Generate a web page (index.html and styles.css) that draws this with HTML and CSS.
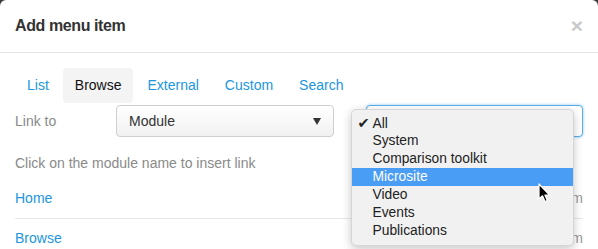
FILE: index.html
```html
<!DOCTYPE html>
<html lang="en">

<head>
  <meta charset="UTF-8">
  <meta name="viewport" content="width=device-width, initial-scale=1.0">
  <title>Add menu item</title>

  <link rel="stylesheet" href="styles.css">
</head>

<body>
  <div class="modal">
    <!-- Dialog header with title and close button -->
    <div class="modal-header">
      <h4 class="modal-title">Add menu item</h4>
      <span class="close">&times;</span>
    </div>

    <div class="modal-body">
      <ul class="tabs">
        <li><a href="#">List</a></li>
        <li class="active"><a href="#">Browse</a></li>
        <li><a href="#">External</a></li>
        <li><a href="#">Custom</a></li>
        <li><a href="#">Search</a></li>
      </ul>

      <div class="form-row">
        <label class="form-label">Link to</label>
        <div class="select">
          <span>Module</span>
          <span class="caret"></span>
        </div>
        <div class="select focus">
          <span></span>
          <span class="caret"></span>

          <!-- Open options list of the category select -->
          <ul class="dropdown">
            <li class="checked">All</li>
            <li>System</li>
            <li>Comparison toolkit</li>
            <li class="hover">Microsite</li>
            <li>Video</li>
            <li>Events</li>
            <li>Publications</li>
          </ul>
        </div>
      </div>

      <p class="help">Click on the module name to insert link</p>

      <ul class="modules">
        <li><a href="#">Home</a><span class="type">System</span></li>
        <li><a href="#">Browse</a><span class="type">System</span></li>
      </ul>
    </div>

    <svg class="cursor" width="13" height="20" viewBox="0 0 13 20">
      <path d="M1 1 L1 16 L4.5 12.8 L7 18.5 L9.3 17.5 L6.9 12 L11.5 12 Z" fill="#000" stroke="#fff" stroke-width="1.2" stroke-linejoin="round" />
    </svg>
  </div>
</body>

</html>
```

FILE: styles.css
```css
/* Page and dialog frame */
body {
  margin: 0;
  background-color: #3a3a3a;
  font-family: "Liberation Sans", Arial, Helvetica, sans-serif;
  font-size: 14px;
  color: #333;
}

.modal {
  position: relative;
  width: 598px;
  height: 249px;
  overflow: hidden;
  background-color: #fff;
  border-radius: 6px 6px 0 0;
}

.modal-header {
  display: flex;
  justify-content: space-between;
  align-items: center;
  padding: 15px;
  border-bottom: 1px solid #e5e5e5;
}

.modal-title {
  margin: 0;
  font-size: 16px;
  line-height: 22px;
  font-weight: bold;
  letter-spacing: -0.4px;
  color: #333;
}

.close {
  font-size: 21px;
  line-height: 22px;
  font-weight: bold;
  color: #c9c9c9;
}

.modal-body {
  padding: 15px;
}

/* Tabs */
.tabs {
  display: flex;
  margin: 0 0 2px;
  padding: 0;
  list-style: none;
}

.tabs li {
  margin-right: 2px;
}

.tabs a {
  display: block;
  padding: 8px 12px;
  line-height: 19px;
  border-radius: 4px;
  color: #2196de;
  text-decoration: none;
}

.tabs li.active a {
  background-color: #f4f4f4;
  color: #111;
}

/* Link to row */
.form-row {
  display: flex;
  align-items: center;
}

.form-label {
  width: 101px;
  color: #8a8a8a;
}

.select {
  position: relative;
  flex: 1;
  display: flex;
  justify-content: space-between;
  align-items: center;
  height: 30px;
  padding: 0 12px 0 12px;
  border: 1px solid #cfcfcf;
  border-radius: 4px;
  background: linear-gradient(#fff, #f1f1f1);
  color: #333;
  font-size: 14px;
}

.select + .select {
  margin-left: 32px;
}

.select.focus {
  border-color: #5aaeea;
  background: #fff;
  box-shadow: 0 0 3px rgba(90, 174, 234, 0.7);
}

.caret {
  width: 0;
  height: 0;
  border-left: 4.5px solid transparent;
  border-right: 4.5px solid transparent;
  border-top: 7px solid #333;
}

.select.focus .caret {
  border-top-color: #777;
  margin-right: -4px;
}

/* Open options list */
.dropdown {
  position: absolute;
  left: -16px;
  top: 3px;
  width: 221px;
  margin: 0;
  padding: 4px 0 5px;
  list-style: none;
  background-color: #f1f1f1;
  border: 1px solid #d6d6d6;
  border-radius: 5px;
  box-shadow: 0 3px 10px rgba(0, 0, 0, 0.22);
  font-size: 13.8px;
  color: #222;
}

.dropdown li {
  height: 18px;
  line-height: 18px;
  padding-left: 21px;
}

.dropdown li.checked::before {
  content: "\2714";
  display: inline-block;
  width: 15px;
  margin-left: -15px;
  font-family: "DejaVu Sans", sans-serif;
  font-size: 14.5px;
  color: #222;
}

.dropdown li.hover {
  background-color: #4a9df5;
  color: #fff;
}

/* Module list */
.help {
  margin: 16px 0 6px;
  line-height: 20px;
  color: #8a8a8a;
}

.modules {
  margin: 0;
  padding: 0;
  list-style: none;
}

.modules li {
  display: flex;
  justify-content: space-between;
  padding: 9px 0 10px;
  line-height: 20px;
  border-bottom: 1px solid #e8e8e8;
}

.modules a {
  color: #2196de;
  text-decoration: none;
}

.modules .type {
  color: #999;
}

.cursor {
  position: absolute;
  left: 538px;
  top: 183px;
}
```
